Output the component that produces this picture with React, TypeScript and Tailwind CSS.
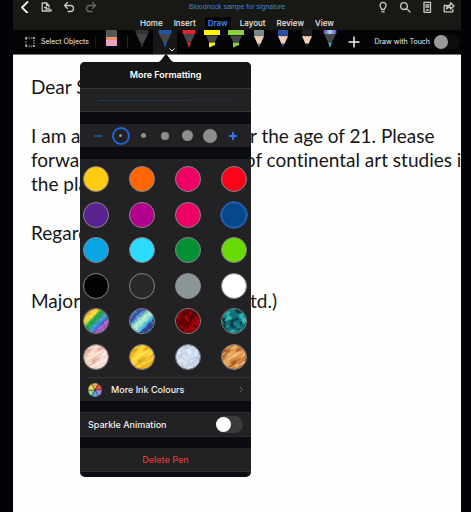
import type { ReactNode } from "react";

const ui = "font-[Inter,'Liberation_Sans',sans-serif]";

const stroke = {
  fill: "none",
  stroke: "#c9c9c6",
  strokeWidth: 1.3,
  strokeLinecap: "round" as const,
  strokeLinejoin: "round" as const,
};

function IconButton({ label, children }: { label: string; children: ReactNode }) {
  return (
    <button aria-label={label} className="flex h-[14px] w-3 items-center justify-center">
      <svg viewBox="0 0 12 12" className="size-3" {...stroke}>
        {children}
      </svg>
    </button>
  );
}

function Header() {
  return (
    <header className="bg-[#181815]">
      <div className="flex h-[14px] items-center justify-between pr-[6px] pl-[6px]">
        <div className="flex flex-1 gap-[10px]">
          <IconButton label="Back">
            <path d="M8.5 1 3 6.5 8.5 12" strokeWidth="1.8" stroke="#f0f0f0" />
          </IconButton>
          <IconButton label="File">
            <path d="M4.500 10H1.200V2h4.300L8 4.500V6M5.500 2v2.500H8M3.500 6.500h2M5 8h3.500M5 10h5V8.500" />
          </IconButton>
          <IconButton label="Undo">
            <path d="M4.500 1.500 1.500 4.500l3 3M1.800 4.500h5.700c4 0 4 6 0 6H5" />
          </IconButton>
          <IconButton label="Redo">
            <path stroke="#686866" d="M7.500 1.500l3 3-3 3M10.200 4.500H4.500c-4 0-4 6 0 6H7" />
          </IconButton>
        </div>
        <h1 className="font-['Liberation_Sans',sans-serif] text-[7px] leading-[14px] whitespace-nowrap text-[#4680dc]">
          Bloodnock sampe for signature
        </h1>
        <div className="flex flex-1 justify-end gap-[10px]">
          <IconButton label="Tell me">
            <path d="M4.700 8.500C4.700 7 3 6.500 3 4.300a3 3 0 0 1 6 0C9 6.500 7.300 7 7.300 8.500zM4.800 10.800h2.400" />
          </IconButton>
          <IconButton label="Search">
            <path d="M5 8.500a3.400 3.400 0 1 0 0-6.800 3.400 3.400 0 0 0 0 6.800zM7.600 7.600 11 11" />
          </IconButton>
          <IconButton label="Mobile view">
            <path d="M3 1.300h6.500v10H3zM4.800 4h3M4.800 6h3M5.300 9h2" />
          </IconButton>
          <IconButton label="Share">
            <path d="M4 4.500H1.200v6.300h8.600V8.500M3.500 8c.5-3 2-4 4-4V1.700L11 5 7.500 8V6c-2 0-3 .5-4 2z" />
          </IconButton>
        </div>
      </div>
      <nav className="flex h-4 items-end justify-center gap-[7px] text-[8px] leading-[13px] font-medium text-[#ececea]">
        {["Home", "Insert", "Draw", "Layout", "Review", "View"].map((tab) => (
          <button key={tab} className={tab === "Draw" ? "bg-[#050507] px-[3px] font-semibold text-[#3f83ea]" : "px-[2px]"}>
            {tab}
          </button>
        ))}
      </nav>
    </header>
  );
}

type PenKind = "pen" | "marker" | "pencil";
const pens: { name: string; kind: PenKind; color: string; body: string }[] = [
  { name: "Black pen", kind: "pen", color: "#343436", body: "#444446" },
  { name: "Blue pen", kind: "pen", color: "#1b57a5", body: "#464648" },
  { name: "Red pen", kind: "pen", color: "#e62229", body: "#464648" },
  { name: "Yellow highlighter", kind: "marker", color: "#fff600", body: "#464648" },
  { name: "Green highlighter", kind: "marker", color: "#8ed044", body: "#464648" },
  { name: "Grey pencil", kind: "pencil", color: "#7b8788", body: "#f4ceb5" },
  { name: "Blue pencil", kind: "pencil", color: "#2851a3", body: "#f4ceb5" },
  { name: "Black pencil", kind: "pencil", color: "#202022", body: "#f4ceb5" },
  { name: "Galaxy pen", kind: "pen", color: "url(#galaxy)", body: "#464648" },
];

function Pen({ kind, color, body }: { kind: PenKind; color: string; body: string }) {
  return (
    <svg viewBox="0 0 16 18" className="h-[18px] w-4">
      <defs>
        <linearGradient id="galaxy">
          <stop offset="0" stopColor="#6a35b5" />
          <stop offset=".5" stopColor="#8fe9ee" />
          <stop offset="1" stopColor="#7a35c5" />
        </linearGradient>
      </defs>
      {kind === "pen" && (
        <>
          <path d="M2 3h12l-1 3-3.500 7h-3L3 6z" fill={body} />
          <path d="M1.500 0h13v2.500l-.5 1.500H2l-.5-1.500z" fill={color} />
          <path d="M6.200 12.500h3.600L8.500 17h-1z" fill={color === "url(#galaxy)" ? "#3fa6b8" : color} />
        </>
      )}
      {kind === "marker" && (
        <>
          <path d="M0 0h16v5H0z" fill={color} />
          <path d="M2 5.500h12L11 12H5z" fill={body} />
          <path d="M5 12.500h6V15l-6 2.500z" fill={color} />
        </>
      )}
      {kind === "pencil" && (
        <>
          <path d="M3 6h10l-3.500 8h-3z" fill={body} />
          <path d="M3 0h10v6.500l-1.700-1-1.600 1.300L8 5.500 6.300 6.800 4.700 5.500 3 6.500z" fill={color} />
          <path d="M6.500 13.500h3L8 17.500z" fill={color} />
        </>
      )}
    </svg>
  );
}

function Toolbar() {
  return (
    <div className="flex h-[25px] items-stretch border-b border-[#77777a] bg-[#040407] pr-px pl-3 text-[7px] text-[#efefef]">
      <button className="flex items-center gap-[6px] whitespace-nowrap">
        <svg viewBox="0 0 10 10" className="size-[10px]" fill="none" stroke="#b9b9b9">
          <path d="M1 1h8v8H1z" strokeDasharray="1.500 1" />
          <path d="M0 1h2M1 0v2M8 1h2M9 0v2M0 9h2M1 8v2M8 9h2M9 8v2" />
        </svg>
        Select Objects
      </button>
      <div className="ml-[6px] h-3 w-px self-center bg-[#19191c]" />
      <button aria-label="Eraser" className="ml-[10px] flex items-start">
        <svg viewBox="0 0 11 17" className="h-[17px] w-[11px]">
          <path d="M0 0h11v7H0z" fill="#58585a" />
          <path d="M0 7h11v3H0z" fill="#e39a68" />
          <path d="M0 10h11v6H0z" fill="#eaa0c8" />
        </svg>
      </button>
      <div className="ml-[10px] h-3 w-px self-center bg-[#242427]" />
      <div className="ml-[2px] grid w-[212px] grid-cols-9">
        {pens.map((pen) => (
          <button
            key={pen.name}
            aria-label={pen.name}
            className={
              pen.name === "Blue pen"
                ? "relative flex items-start justify-center bg-[#17171a]"
                : "flex items-start justify-center"
            }
          >
            <Pen kind={pen.kind} color={pen.color} body={pen.body} />
            {pen.name === "Blue pen" && (
              <svg viewBox="0 0 6 4" className="absolute right-[2px] bottom-[2px] h-1 w-[6px]" fill="none" stroke="#e8e8e8">
                <path d="M.5.5 3 3 5.500.5" />
              </svg>
            )}
          </button>
        ))}
      </div>
      <button aria-label="Add pen" className="ml-[6px] flex items-center">
        <svg viewBox="0 0 12 12" className="size-3" stroke="#f2f2f2" strokeWidth="1.500">
          <path d="M6 .5v11M.5 6h11" />
        </svg>
      </button>
      <label className="ml-auto flex items-center gap-1 whitespace-nowrap">
        Draw with Touch
        <input
          type="checkbox"
          className="h-[14px] w-[26px] appearance-none rounded-full bg-[#0d0d10] before:block before:size-[14px] before:rounded-full before:bg-[#9a9a9a]"
        />
      </label>
    </div>
  );
}

const textures: Record<
  string,
  { stops: string[]; dark: string; light: string; freq: string; angle: number; strength: number }
> = {
  Rainbow: { stops: ["#f18a22", "#ffd534", "#ffe03a", "#17a44b", "#24a05a", "#3f9be0", "#3e70c8", "#5a3c9c", "#b05ac8"], dark: "#1d3566", light: "#ffffff", freq: "0.3 0.4", angle: 45, strength: 0.15 },
  Galaxy: { stops: ["#2ca9d8", "#383aa0", "#4a98d0", "#b5f2c4", "#a5ecd0", "#4ab8dc", "#2386cc", "#263e93"], dark: "#27479a", light: "#e5ffff", freq: "0.3 0.4", angle: 45, strength: 0.25 },
  Lava: { stops: ["#8a0008", "#5c0005", "#a3000c"], dark: "#240003", light: "#c40a18", freq: "0.250 0.3", angle: 45, strength: 0.6 },
  Ocean: { stops: ["#138a91", "#0d6a74", "#16757c"], dark: "#031b20", light: "#3cd0d0", freq: "0.150 0.2", angle: 45, strength: 0.8 },
  "Rose gold": { stops: ["#f6dcd0", "#f3d2c4", "#f6ded6"], dark: "#df9f83", light: "#ffffff", freq: "0.060 0.4", angle: 45, strength: 0.8 },
  Gold: { stops: ["#f9c928", "#ffd83c", "#efb41a"], dark: "#cf8f0a", light: "#fff07a", freq: "0.060 0.4", angle: 45, strength: 0.7 },
  Silver: { stops: ["#c9d8ea", "#d5e0ee", "#c2d2e6"], dark: "#a3b8d4", light: "#f5f9ff", freq: "0.2 0.350", angle: 45, strength: 0.6 },
  Bronze: { stops: ["#dc8f4a", "#e8a660", "#cb7c36"], dark: "#9c4c14", light: "#ffd79a", freq: "0.060 0.350", angle: 45, strength: 0.8 },
};

function Texture({ name }: { name: string }) {
  const t = textures[name];
  const id = name.replace(" ", "");
  return (
    <svg viewBox="0 0 26 26" className="size-full rounded-full">
      <defs>
        <linearGradient id={id} gradientTransform={`rotate(${t.angle})`}>
          {t.stops.map((c, i) => (
            <stop key={i} offset={0.2 + i / (t.stops.length - 1)} stopColor={c} />
          ))}
        </linearGradient>
        {[t.dark, t.light].map((c, i) => (
          <filter key={c} id={`${id}-${i}`} x="0" y="0" width="1" height="1">
            <feTurbulence type="fractalNoise" baseFrequency={t.freq} numOctaves="3" seed={i * 7 + 3} />
            <feColorMatrix values="0 0 0 0 0  0 0 0 0 0  0 0 0 0 0  6 0 0 0 -3.100" result="mask" />
            <feFlood floodColor={c} />
            <feComposite in2="mask" operator="in" />
          </filter>
        ))}
      </defs>
      <rect width="26" height="26" fill={`url(#${id})`} />
      <g transform="rotate(-32 13 13)" opacity={t.strength}>
        <rect x="-6" y="-6" width="38" height="38" filter={`url(#${id}-0)`} />
        <rect x="-6" y="-6" width="38" height="38" filter={`url(#${id}-1)`} />
      </g>
    </svg>
  );
}

const swatches: [string, string][] = [
  ["Yellow", "bg-[#ffcb13]"],
  ["Orange", "bg-[#ff6602]"],
  ["Pink", "bg-[#ef0064]"],
  ["Red", "bg-[#f90419]"],
  ["Purple", "bg-[#5a2392]"],
  ["Magenta", "bg-[#b0008c]"],
  ["Rose", "bg-[#ec0064]"],
  ["Dark blue", "bg-[#06498b]"],
  ["Blue", "bg-[#08a5e5]"],
  ["Light blue", "bg-[#2cdcff]"],
  ["Green", "bg-[#049035]"],
  ["Lime", "bg-[#66db05]"],
  ["Black", "bg-[#020204]"],
  ["Charcoal", "bg-[#29292b]"],
  ["Grey", "bg-[#8b9797]"],
  ["White", "bg-white"],
  ["Rainbow", ""],
  ["Galaxy", ""],
  ["Lava", ""],
  ["Ocean", ""],
  ["Rose gold", ""],
  ["Gold", ""],
  ["Silver", ""],
  ["Bronze", ""],
];

const sizes = ["size-[3px]", "size-[5px]", "size-2", "size-[11px]", "size-[14px]"];

const wheel = ["#eda85a", "#e5544d", "#a58ae0", "#58a8e0", "#9ad88a", "#f5dc4f"];

function ColourWheel() {
  return (
    <svg viewBox="-7 -7 14 14" className="size-[14px]" stroke="#222224" strokeWidth=".4">
      {wheel.map((c, i) => (
        <path key={i} d="M0 0-3.500-6.060A7 7 0 0 1 3.500-6.060z" fill={c} transform={`rotate(${i * 60})`} />
      ))}
    </svg>
  );
}

function FormattingMenu() {
  return (
    <section
      aria-label="More Formatting"
      className={`absolute top-[7px] left-[67px] w-[171px] rounded-[5px] bg-[#0b0b12] text-[9px] text-[#f0f0f0] ${ui}`}
    >
      <svg viewBox="0 0 16 8" className="absolute -top-[8px] left-[78px] h-2 w-4" fill="#111112">
        <path d="M0 8C3 8 6 1 8 0c2 1 5 8 8 8z" />
      </svg>
      <h2 className="h-[26px] rounded-t-[5px] bg-[#171715] text-center text-[9px] leading-[26px] font-semibold text-white">
        More Formatting
      </h2>
      <div className="flex h-6 items-center justify-center border-y border-[#363638] bg-[#222224]">
        <div className="h-px w-[136px] bg-linear-to-r from-[#20385c] to-[#25282e]" />
      </div>
      <div className="mt-3 grid h-[23px] grid-cols-7 items-center justify-items-center bg-[#222224] px-[7px]">
        <button aria-label="Thinner" className="h-[2px] w-2 bg-[#1f4d91]" />
        {sizes.map((size, i) => (
          <label
            key={size}
            className={
              i === 0
                ? "flex size-[18px] items-center justify-center rounded-full border-2 border-[#1f63da]"
                : "flex items-center justify-center"
            }
          >
            <input
              type="radio"
              name="thickness"
              aria-label={`Thickness ${i + 1}`}
              defaultChecked={i === 0}
              className={`appearance-none rounded-full bg-[#8e8e90] ${size}`}
            />
          </label>
        ))}
        <button aria-label="Thicker">
          <svg viewBox="0 0 8 8" className="size-2" stroke="#2b78f0" strokeWidth="2">
            <path d="M4 0v8M0 4h8" />
          </svg>
        </button>
      </div>
      <div className="mt-3 bg-[#222224] pt-[7px]">
        <div className="grid h-[204px] grid-cols-[repeat(4,26px)] content-between justify-between pr-1 pl-[3px]">
          {swatches.map(([name, color]) => (
            <button
              key={name}
              aria-label={name}
              className={`size-[26px] overflow-hidden rounded-full border ${
                name === "Dark blue" ? "border-[#3470dc] outline outline-[#2a62c8]/70" : "border-[#8b8587]"
              } ${color}`}
            >
              {textures[name] && <Texture name={name} />}
            </button>
          ))}
        </div>
        <button className="mt-[7px] ml-2 flex h-6 w-[163px] items-center border-t border-[#353537] pr-2 font-medium">
          <ColourWheel />
          <span className="ml-[9px] flex-1 text-left">More Ink Colours</span>
          <svg viewBox="0 0 4 8" className="h-[7px] w-1" fill="none" stroke="#77777a">
            <path d="M.5 1 3.500 4 .5 7" />
          </svg>
        </button>
      </div>
      <label className="mt-[11px] flex h-[25px] items-center justify-between border-y border-[#2c2c30] bg-[#222224] pr-2 pl-2 font-medium">
        Sparkle Animation
        <input
          type="checkbox"
          className="h-[17px] w-[27px] appearance-none rounded-full bg-[#3b3b3e] before:mt-px before:block before:size-[15px] before:rounded-full before:bg-white"
        />
      </label>
      <button className="mt-[11px] mb-[5px] h-6 w-full border-b border-[#343436] bg-[#222224] font-medium text-[#e03a35]">
        Delete Pen
      </button>
    </section>
  );
}

function Line({ start, end = "" }: { start: string; end?: string }) {
  return (
    <p className="grid grid-cols-[209px_1fr] whitespace-nowrap">
      <span>{start}</span>
      <span>{end}</span>
    </p>
  );
}

export default function App() {
  return (
    <div className="min-h-screen bg-[#030307] pr-[10px] pl-[13px]">
      <div className={`flex min-h-screen flex-col ${ui}`}>
        <Header />
        <Toolbar />
        <main className="relative flex-1 bg-[#fefefd]">
          <article className="overflow-hidden pt-5 pl-[18px] font-[Lato,sans-serif] text-[19px] leading-6 text-[#161616] [font-variant-ligatures:none]">
            <Line start="Dear S" />
            <div className="mt-[25px]">
              <Line start="I am a" end="er the age of 21. Please" />
              <Line start="forwar" end={"\u00a0of continental art studies i"} />
              <Line start="the pla" />
            </div>
            <div className="mt-[25px]">
              <Line start="Regard" />
            </div>
            <div className="mt-11">
              <Line start="Major" end="etd.)" />
            </div>
          </article>
          <FormattingMenu />
        </main>
      </div>
    </div>
  );
}
